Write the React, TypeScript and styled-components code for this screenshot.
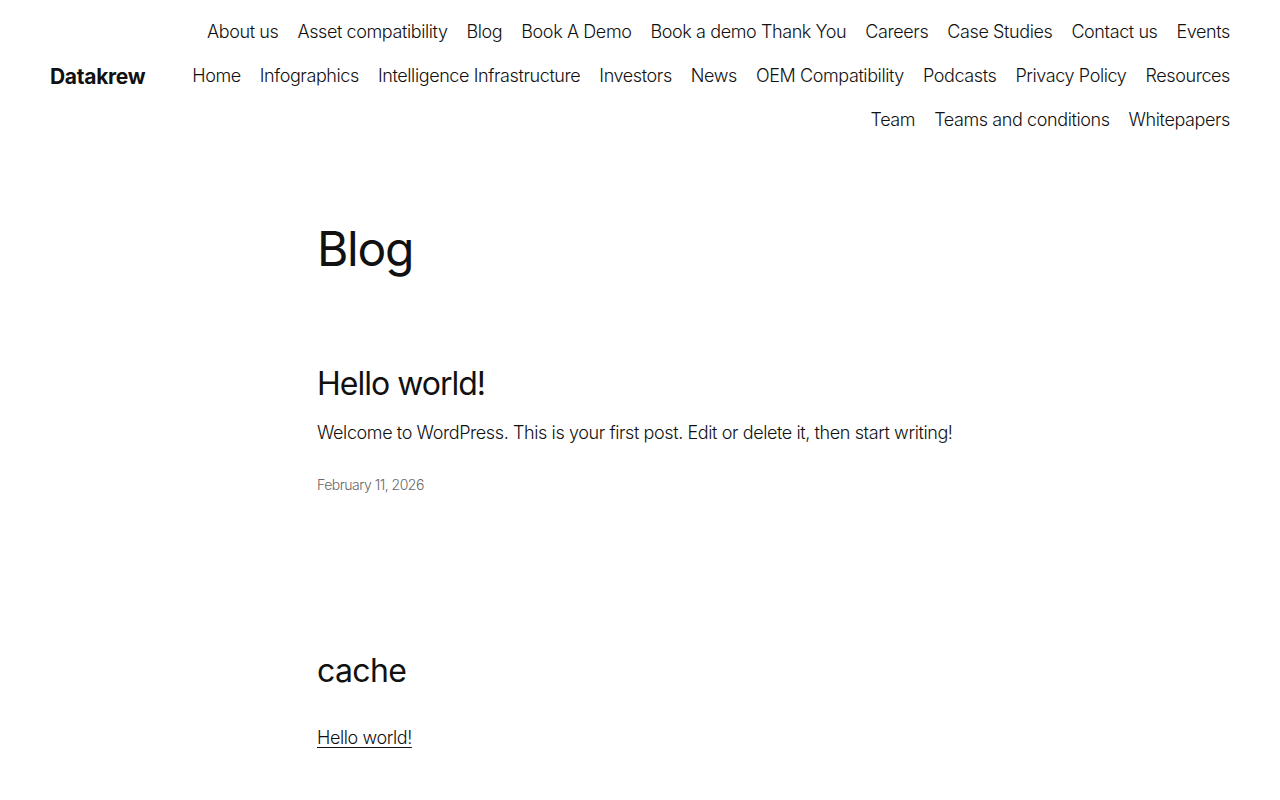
import styled, { createGlobalStyle } from 'styled-components'

const GlobalStyle = createGlobalStyle`
    body {
        margin: 0;
        background: #fff;
        color: #111;
        font-family: Inter, 'Noto Sans', sans-serif;
        -webkit-font-smoothing: antialiased;
    }
`

const topLinks = [
    'About us',
    'Asset compatibility',
    'Blog',
    'Book A Demo',
    'Book a demo Thank You',
    'Careers',
    'Case Studies',
    'Contact us',
    'Events',
    'Home',
    'Infographics',
    'Intelligence Infrastructure',
    'Investors',
    'News',
    'OEM Compatibility',
    'Podcasts',
    'Privacy Policy',
    'Resources',
    'Team',
    'Teams and conditions',
    'Whitepapers',
]

export default function App() {
    return (
        <>
            <GlobalStyle />
            <Header>
                <SiteTitle href='#'>Datakrew</SiteTitle>
                <Nav>
                    {topLinks.map((label) => (
                        <NavLink key={label} href='#'>
                            {label}
                        </NavLink>
                    ))}
                </Nav>
            </Header>
            <Main>
                <PageTitle>Blog</PageTitle>
                <Post>
                    <PostTitle>Hello world!</PostTitle>
                    <Excerpt>
                        Welcome to WordPress. This is your first post. Edit or delete it, then start writing!
                    </Excerpt>
                    <PostDate>February 11, 2026</PostDate>
                </Post>
                <Section>
                    <SectionTitle>cache</SectionTitle>
                    <SectionLink href='#'>Hello world!</SectionLink>
                </Section>
            </Main>
        </>
    )
}

const Header = styled.header`
    display: flex;
    align-items: center;
    justify-content: space-between;
    gap: 40px;
    padding: 20px 50px 0;
`

const SiteTitle = styled.a`
    flex-shrink: 0;
    font-size: 21px;
    font-weight: 700;
    letter-spacing: -0.3px;
    color: #111;
    text-decoration: none;
`

const Nav = styled.nav`
    display: flex;
    flex-wrap: wrap;
    justify-content: flex-end;
    column-gap: 19px;
    row-gap: 20px;
`

const NavLink = styled.a`
    font-size: 18px;
    line-height: 24px;
    font-weight: 300;
    letter-spacing: -0.4px;
    color: #111;
    text-decoration: none;
    white-space: nowrap;
`

const Main = styled.main`
    width: 646px;
    margin: 0 auto;
    padding-top: 87px;
`

const PageTitle = styled.h1`
    margin: 0;
    font-size: 48px;
    line-height: 60px;
    font-weight: 400;
    letter-spacing: -1.3px;
`

const Post = styled.article`
    padding-top: 85px;
`

const PostTitle = styled.h2`
    margin: 0;
    font-size: 32px;
    line-height: 40px;
    font-weight: 400;
    letter-spacing: -1px;
`

const Excerpt = styled.p`
    margin: 15px 0 0;
    font-size: 18px;
    line-height: 28px;
    font-weight: 300;
    letter-spacing: -0.4px;
`

const PostDate = styled.div`
    margin-top: 28px;
    font-size: 14px;
    line-height: 20px;
    font-weight: 300;
    letter-spacing: -0.5px;
    color: #686868;
`

const Section = styled.section`
    padding-top: 156px;
`

const SectionTitle = styled.h2`
    margin: 0;
    font-size: 32px;
    line-height: 40px;
    font-weight: 400;
    letter-spacing: -0.6px;
`

const SectionLink = styled.a`
    display: inline-block;
    margin-top: 33px;
    font-size: 18px;
    line-height: 28px;
    font-weight: 300;
    letter-spacing: -0.4px;
    color: #111;
    text-decoration: underline;
    text-underline-offset: 3px;
    text-decoration-thickness: 1px;
`
